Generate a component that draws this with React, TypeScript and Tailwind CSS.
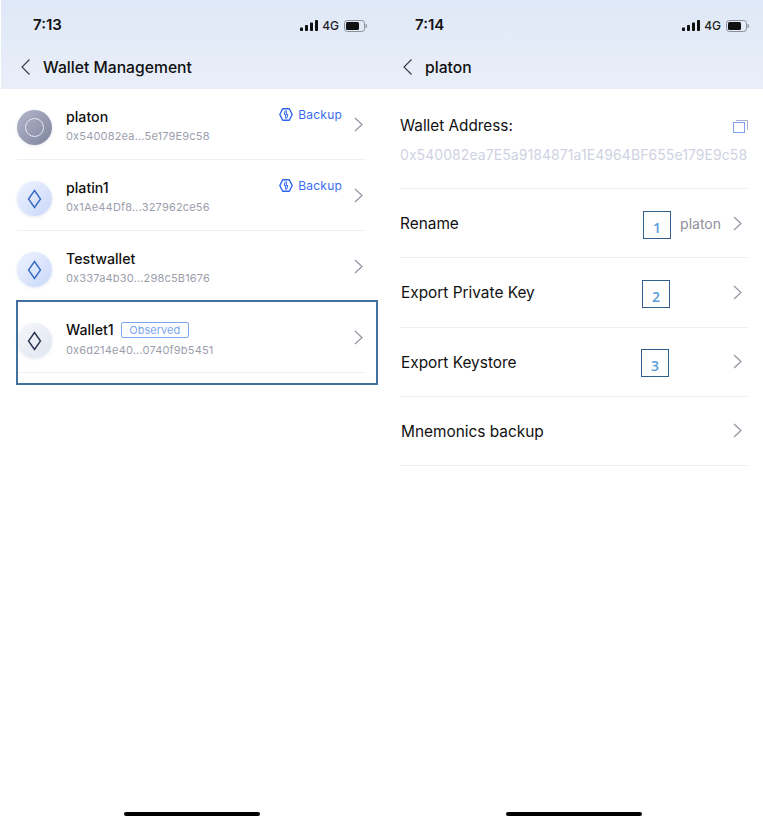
import React from "react";

const font = { fontFamily: "Inter, 'Liberation Sans', sans-serif" };

function Chevron({ className = "" }: { className?: string }) {
  return (
    <svg width="9" height="15" viewBox="0 0 9 15" fill="none" className={className}>
      <path d="M1 1 L8 7.5 L1 14" stroke="#8d8f9e" strokeWidth="1.1" />
    </svg>
  );
}

function Back() {
  return (
    <svg width="11" height="18" viewBox="0 0 11 18" fill="none">
      <path d="M9.5 1.5 L2 9 L9.5 16.5" stroke="#33363f" strokeWidth="1.1" />
    </svg>
  );
}

function Status({ time, pad }: { time: string; pad: string }) {
  return (
    <div className={`flex h-[50px] items-center justify-between pt-[1px] ${pad}`}>
      <span className="text-[15px] font-semibold text-[#111]">{time}</span>
      <div className="flex items-center gap-[4px]">
        <svg width="18" height="11" viewBox="0 0 18 11">
          <rect x="0" y="7.5" width="3" height="3.5" rx="0.7" fill="#111" />
          <rect x="5" y="5" width="3" height="6" rx="0.7" fill="#111" />
          <rect x="10" y="2.5" width="3" height="8.5" rx="0.7" fill="#111" />
          <rect x="15" y="0" width="3" height="11" rx="0.7" fill="#111" />
        </svg>
        <span className="text-[12px] font-medium leading-none text-[#222]">4G</span>
        <svg width="23" height="12" viewBox="0 0 23 12" className="ml-[1px]">
          <rect x="0.5" y="0.5" width="20" height="11" rx="2.8" fill="none" stroke="#8c8f96" />
          <rect x="2" y="2" width="13" height="8" rx="1.5" fill="#111" />
          <rect x="21.6" y="4" width="1.2" height="4" rx="0.6" fill="#8c8f96" />
        </svg>
      </div>
    </div>
  );
}

function Header({ time, title, pad, navPad, gap }: { time: string; title: string; pad: string; navPad: string; gap: string }) {
  return (
    <div className="h-[89px] bg-gradient-to-b from-[#dfe8f7] to-[#e9eff9]">
      <Status time={time} pad={pad} />
      <div className={`flex h-[34px] items-center ${navPad} ${gap}`}>
        <Back />
        <span className="pt-[1px] text-[15.7px] font-medium text-[#111]">{title}</span>
      </div>
    </div>
  );
}

function Avatar({ kind }: { kind: "main" | "blue" | "dark" }) {
  const bg =
    kind === "main"
      ? "from-[#b2b7cb] to-[#7f849e]"
      : kind === "blue"
        ? "from-[#eef3fe] to-[#c9d8fa]"
        : "from-[#f6f7fa] to-[#dfe5f0]";
  return (
    <div className={`mt-[6px] flex h-[35px] w-[35px] shrink-0 items-center justify-center rounded-full bg-gradient-to-br shadow-[0_1px_3px_rgba(180,190,215,0.35)] ${bg}`}>
      {kind === "main" ? (
        <div className="h-[19px] w-[19px] rounded-full border-[1.5px] border-[#e6e8f0]" />
      ) : (
        <svg width="15" height="20" viewBox="0 0 15 20" fill="none">
          <path d="M7.5 1.5 L13.5 10 L7.5 18.5 L1.5 10 Z" stroke={kind === "blue" ? "#3568c4" : "#27304f"} strokeWidth="1.4" />
        </svg>
      )}
    </div>
  );
}

function BackupIcon() {
  return (
    <svg width="14" height="13" viewBox="0 0 14 13" fill="none">
      <path d="M3.7 0.8 H10.3 L13.2 6.5 L10.3 12.2 H3.7 L0.8 6.5 Z" stroke="#2f66f0" strokeWidth="1.4" strokeLinejoin="round" />
      <path d="M6.2 2.5 L5.2 6.5 H6.6 V10.5 M7.6 10.5 L8.8 6.5 H7.4 V2.5" stroke="#2f66f0" strokeWidth="1" />
    </svg>
  );
}

function WalletRow({ name, addr, kind, backup, observed }: { name: string; addr: string; kind: "main" | "blue" | "dark"; backup?: boolean; observed?: boolean }) {
  return (
    <div className="flex h-[71px] items-center border-b border-[#eef0f7] pt-[1px]">
      <Avatar kind={kind} />
      <div className={`ml-[14px] flex min-w-0 flex-1 flex-col gap-[3px] ${observed ? "mt-[2px]" : "mt-[1px]"}`}>
        <div className="flex h-[20px] items-center pt-[1px]">
          <span className="text-[14.2px] font-medium text-[#111]">{name}</span>
          {observed && (
            <span className="ml-[7px] flex h-[16px] w-[68px] items-center justify-center rounded-[2px] border border-[#7aa5ee] text-[11px] leading-none text-[#7aa5ee]">
              Observed
            </span>
          )}
        </div>
        <span className="text-[11px] leading-[15px] tracking-[0.18px] text-[#9c9eac]">{addr}</span>
      </div>
      {backup && (
        <div className="mb-[20px] mr-[12px] flex items-center gap-[5px]">
          <BackupIcon />
          <span className="text-[12px] tracking-[0.2px] text-[#3c6df0]">Backup</span>
        </div>
      )}
      <Chevron className="mr-[3px]" />
    </div>
  );
}

function Mark({ n, className }: { n: string; className: string }) {
  return (
    <div className={`absolute flex h-[28px] w-[28px] items-end justify-center border border-[#2f5f8a] pb-[1px] text-[14px] font-semibold leading-[18px] text-[#5b9bd5] ${className}`} style={{ fontFamily: "'Open Sans', sans-serif" }}>
      {n}
    </div>
  );
}

function ActionRow({ label, right, indent }: { label: string; right?: string; indent?: boolean }) {
  return (
    <div className={`flex h-[69.25px] items-center justify-between border-b border-[#eef0f7] pr-[6px] ${indent ? "pl-[1px]" : ""}`}>
      <span className="pt-[1px] text-[15.4px] text-[#111]">{label}</span>
      <div className="flex items-center gap-[12px]">
        {right && <span className="text-[14px] text-[#8e909c]">{right}</span>}
        <Chevron />
      </div>
    </div>
  );
}

export default function App() {
  return (
    <div className="relative flex h-[827px] w-[763px] overflow-hidden bg-white" style={font}>
      <div className="relative w-[383px] shrink-0">
        <div className="pl-[1px]">
          <Header time="7:13" title="Wallet Management" pad="pl-[32px] pr-[16px]" navPad="pl-[19px]" gap="gap-[12px]" />
        </div>
        <div className="pl-[17px] pr-[17px]">
          <WalletRow name="platon" addr="0x540082ea...5e179E9c58" kind="main" backup />
          <WalletRow name="platin1" addr="0x1Ae44Df8...327962ce56" kind="blue" backup />
          <WalletRow name="Testwallet" addr="0x337a4b30...298c5B1676" kind="blue" />
          <WalletRow name="Wallet1" addr="0x6d214e40...0740f9b5451" kind="dark" observed />
        </div>
        <div className="absolute left-[16px] top-[300px] h-[85px] w-[362px] border-2 border-[#41719c]" />
        <div className="absolute bottom-[11px] left-[124px] h-[4px] w-[136px] rounded-full bg-black" />
      </div>
      <div className="relative flex-1">
        <Header time="7:14" title="platon" pad="pl-[32px] pr-[14px]" navPad="pl-[19px]" gap="gap-[12px]" />
        <div className="pl-[17px] pr-[15px]">
          <div className="h-[100px] border-b border-[#eef0f7] pt-[27px]">
            <div className="flex h-[20px] items-center justify-between">
              <span className="text-[15.3px] text-[#111]">Wallet Address:</span>
              <svg width="15" height="13" viewBox="0 0 15 13" fill="none">
                <rect x="0.5" y="2.5" width="11" height="10" stroke="#7f9ff0" />
                <path d="M3 0.5 H14.5 V10" stroke="#a9b3cc" />
              </svg>
            </div>
            <div className="mt-[8px] whitespace-nowrap text-[14px] tracking-[0.07px] text-[#cfd2e2]">0x540082ea7E5a9184871a1E4964BF655e179E9c58</div>
          </div>
          <ActionRow label="Rename" right="platon" />
          <ActionRow label="Export Private Key" indent />
          <ActionRow label="Export Keystore" indent />
          <ActionRow label="Mnemonics backup" indent />
        </div>
        <Mark n="1" className="left-[260px] top-[211px]" />
        <Mark n="2" className="left-[259px] top-[280px]" />
        <Mark n="3" className="left-[258px] top-[349px]" />
        <div className="absolute bottom-[11px] left-[123px] h-[4px] w-[136px] rounded-full bg-black" />
      </div>
    </div>
  );
}
